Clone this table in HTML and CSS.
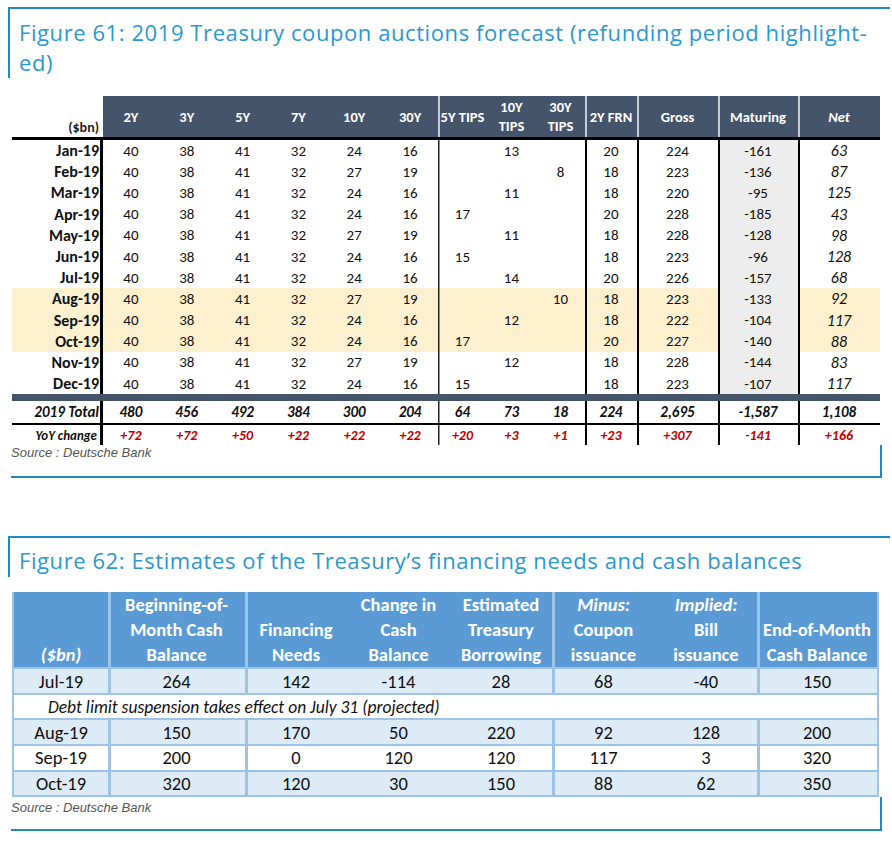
FILE: index.html
```html
<!DOCTYPE html>
<html>
<head>
<meta charset="utf-8">
<link rel="stylesheet" href="styles.css">
</head>
<body>
<section class="fig">
  <div class="fig-head fig-head-61">
    <h2 class="fig-title">Figure 61: 2019 Treasury coupon auctions forecast (refunding period highlight-<br>ed)</h2>
  </div>
  <div class="t61">
    <div class="r61 hdr">
      <div class="c lbl unit">($bn)</div>
      <div class="c h">2Y</div><div class="c h">3Y</div><div class="c h">5Y</div><div class="c h">7Y</div><div class="c h">10Y</div><div class="c h">30Y</div>
      <div class="c h hs">5Y TIPS</div><div class="c h two"><span>10Y<br>TIPS</span></div><div class="c h two"><span>30Y<br>TIPS</span></div>
      <div class="c h hs">2Y FRN</div><div class="c h hs">Gross</div><div class="c h hs">Maturing</div><div class="c h hs it">Net</div>
    </div>
    <div class="rule"></div>
    <div class="r61 body"><div class="c lbl">Jan-19</div><div class="c">40</div><div class="c">38</div><div class="c">41</div><div class="c">32</div><div class="c">24</div><div class="c">16</div><div class="c s1"></div><div class="c">13</div><div class="c"></div><div class="c s2">20</div><div class="c s2">224</div><div class="c s2 mat">-161</div><div class="c s2 net">63</div></div>
    <div class="r61 body"><div class="c lbl">Feb-19</div><div class="c">40</div><div class="c">38</div><div class="c">41</div><div class="c">32</div><div class="c">27</div><div class="c">19</div><div class="c s1"></div><div class="c"></div><div class="c">8</div><div class="c s2">18</div><div class="c s2">223</div><div class="c s2 mat">-136</div><div class="c s2 net">87</div></div>
    <div class="r61 body"><div class="c lbl">Mar-19</div><div class="c">40</div><div class="c">38</div><div class="c">41</div><div class="c">32</div><div class="c">24</div><div class="c">16</div><div class="c s1"></div><div class="c">11</div><div class="c"></div><div class="c s2">18</div><div class="c s2">220</div><div class="c s2 mat">-95</div><div class="c s2 net">125</div></div>
    <div class="r61 body"><div class="c lbl">Apr-19</div><div class="c">40</div><div class="c">38</div><div class="c">41</div><div class="c">32</div><div class="c">24</div><div class="c">16</div><div class="c s1">17</div><div class="c"></div><div class="c"></div><div class="c s2">20</div><div class="c s2">228</div><div class="c s2 mat">-185</div><div class="c s2 net">43</div></div>
    <div class="r61 body"><div class="c lbl">May-19</div><div class="c">40</div><div class="c">38</div><div class="c">41</div><div class="c">32</div><div class="c">27</div><div class="c">19</div><div class="c s1"></div><div class="c">11</div><div class="c"></div><div class="c s2">18</div><div class="c s2">228</div><div class="c s2 mat">-128</div><div class="c s2 net">98</div></div>
    <div class="r61 body"><div class="c lbl">Jun-19</div><div class="c">40</div><div class="c">38</div><div class="c">41</div><div class="c">32</div><div class="c">24</div><div class="c">16</div><div class="c s1">15</div><div class="c"></div><div class="c"></div><div class="c s2">18</div><div class="c s2">223</div><div class="c s2 mat">-96</div><div class="c s2 net">128</div></div>
    <div class="r61 body"><div class="c lbl">Jul-19</div><div class="c">40</div><div class="c">38</div><div class="c">41</div><div class="c">32</div><div class="c">24</div><div class="c">16</div><div class="c s1"></div><div class="c">14</div><div class="c"></div><div class="c s2">20</div><div class="c s2">226</div><div class="c s2 mat">-157</div><div class="c s2 net">68</div></div>
    <div class="r61 body hl"><div class="c lbl">Aug-19</div><div class="c">40</div><div class="c">38</div><div class="c">41</div><div class="c">32</div><div class="c">27</div><div class="c">19</div><div class="c s1"></div><div class="c"></div><div class="c">10</div><div class="c s2">18</div><div class="c s2">223</div><div class="c s2 mat">-133</div><div class="c s2 net">92</div></div>
    <div class="r61 body hl"><div class="c lbl">Sep-19</div><div class="c">40</div><div class="c">38</div><div class="c">41</div><div class="c">32</div><div class="c">24</div><div class="c">16</div><div class="c s1"></div><div class="c">12</div><div class="c"></div><div class="c s2">18</div><div class="c s2">222</div><div class="c s2 mat">-104</div><div class="c s2 net">117</div></div>
    <div class="r61 body hl"><div class="c lbl">Oct-19</div><div class="c">40</div><div class="c">38</div><div class="c">41</div><div class="c">32</div><div class="c">24</div><div class="c">16</div><div class="c s1">17</div><div class="c"></div><div class="c"></div><div class="c s2">20</div><div class="c s2">227</div><div class="c s2 mat">-140</div><div class="c s2 net">88</div></div>
    <div class="r61 body"><div class="c lbl">Nov-19</div><div class="c">40</div><div class="c">38</div><div class="c">41</div><div class="c">32</div><div class="c">27</div><div class="c">19</div><div class="c s1"></div><div class="c">12</div><div class="c"></div><div class="c s2">18</div><div class="c s2">228</div><div class="c s2 mat">-144</div><div class="c s2 net">83</div></div>
    <div class="r61 body"><div class="c lbl">Dec-19</div><div class="c">40</div><div class="c">38</div><div class="c">41</div><div class="c">32</div><div class="c">24</div><div class="c">16</div><div class="c s1">15</div><div class="c"></div><div class="c"></div><div class="c s2">18</div><div class="c s2">223</div><div class="c s2 mat">-107</div><div class="c s2 net">117</div></div>
    <div class="darkbar"></div>
    <div class="r61 tot"><div class="c lbl">2019 Total</div><div class="c">480</div><div class="c">456</div><div class="c">492</div><div class="c">384</div><div class="c">300</div><div class="c">204</div><div class="c s1">64</div><div class="c">73</div><div class="c">18</div><div class="c s2">224</div><div class="c s2">2,695</div><div class="c s2">-1,587</div><div class="c s2">1,108</div></div>
    <div class="rule2"></div>
    <div class="r61 yoy"><div class="c lbl">YoY change</div><div class="c">+72</div><div class="c">+72</div><div class="c">+50</div><div class="c">+22</div><div class="c">+22</div><div class="c">+22</div><div class="c s1">+20</div><div class="c">+3</div><div class="c">+1</div><div class="c s2">+23</div><div class="c s2">+307</div><div class="c s2">-141</div><div class="c s2">+166</div></div>
  </div>
  <div class="fig-foot foot-61"><p class="source">Source : Deutsche Bank</p></div>
</section>

<section class="fig fig62">
  <div class="fig-head fig-head-62">
    <h2 class="fig-title">Figure 62: Estimates of the Treasury’s financing needs and cash balances</h2>
  </div>
  <div class="t62tab">
    <div class="r62 hdr62">
      <div class="d it"><span>($bn)</span></div>
      <div class="d g"><span>Beginning-of-<br>Month Cash<br>Balance</span></div>
      <div class="d g"><span>Financing<br>Needs</span></div>
      <div class="d"><span>Change in<br>Cash<br>Balance</span></div>
      <div class="d"><span>Estimated<br>Treasury<br>Borrowing</span></div>
      <div class="d g"><span><i>Minus:</i><br>Coupon<br>issuance</span></div>
      <div class="d"><span><i>Implied:</i><br>Bill<br>issuance</span></div>
      <div class="d g"><span>End-of-Month<br>Cash Balance</span></div>
    </div>
    <div class="r62 b62 alt"><div class="d">Jul-19</div><div class="d g">264</div><div class="d g">142</div><div class="d">-114</div><div class="d">28</div><div class="d g">68</div><div class="d">-40</div><div class="d g">150</div></div>
    <div class="r62 b62 note"><div class="d notecell">Debt limit suspension takes effect on July 31 (projected)</div></div>
    <div class="r62 b62 alt"><div class="d">Aug-19</div><div class="d g">150</div><div class="d g">170</div><div class="d">50</div><div class="d">220</div><div class="d g">92</div><div class="d">128</div><div class="d g">200</div></div>
    <div class="r62 b62"><div class="d">Sep-19</div><div class="d g">200</div><div class="d g">0</div><div class="d">120</div><div class="d">120</div><div class="d g">117</div><div class="d">3</div><div class="d g">320</div></div>
    <div class="r62 b62 alt"><div class="d">Oct-19</div><div class="d g">320</div><div class="d g">120</div><div class="d">30</div><div class="d">150</div><div class="d g">88</div><div class="d">62</div><div class="d g">350</div></div>
  </div>
  <div class="fig-foot foot-62"><p class="source">Source : Deutsche Bank</p></div>
</section>
</body>
</html>
```

FILE: styles.css
```css
* { box-sizing: border-box; }
body {
  margin: 0;
  background: #ffffff;
  width: 892px;
  font-family: "Carlito", "Lato", "Liberation Sans", sans-serif;
  color: #111;
}
.fig-head {
  margin-left: 8px;
  width: 882px;
  border-top: 2px solid #1e8cc2;
  border-left: 2px solid #1e8cc2;
}
.fig-head-61 { margin-top: 7px; height: 71px; padding: 7.5px 0 0 9px; }
.fig-head-62 { margin-top: 58px; height: 41px; padding: 6.5px 0 0 9px; }
.fig-title {
  margin: 0;
  font-family: "Open Sans", "Liberation Sans", sans-serif;
  font-weight: normal;
  font-size: 22px;
  letter-spacing: 0.58px;
  line-height: 30px;
  color: #2a98d3;
  white-space: nowrap;
}

/* ---------- Figure 61 table ---------- */
.t61 { margin: 18px 0 0 12px; width: 868px; }
.r61 {
  display: grid;
  grid-template-columns: 91px repeat(6, 55.833px) 49px 49px 49px 52px 81px 80px 82px;
}
.r61 .c {
  display: flex;
  align-items: center;
  justify-content: center;
  white-space: nowrap;
}
.hdr { height: 41px; }
.hdr .h {
  background: #44546a;
  color: #fff;
  font-weight: bold;
  font-size: 14.5px;
  line-height: 20px;
  text-align: center;
}
.hdr .h.two { line-height: 19px; }
.hdr .hs { box-shadow: inset 2px 0 0 #c7cbd2; }
.hdr .it { font-style: italic; }
.hdr .unit {
  justify-content: flex-end;
  align-items: flex-end;
  padding: 0 3px 1px 0;
  font-size: 14px;
  color: #222;
  font-weight: normal;
}
.rule { height: 3px; background: #000; }
.rule2 { height: 2px; background: #000; }
.darkbar { height: 7px; background: #44546a; }
.body { height: 21.2px; font-size: 15px; }
.body.hl { background: #fdf0cf; }
.r61 .lbl {
  justify-content: flex-end;
  padding-right: 4px;
  font-weight: bold;
  box-shadow: inset -3px 0 0 #000;
}
.body .lbl { font-size: 16px; }
.hdr .lbl { box-shadow: none; }
.r61 .s1 { box-shadow: inset 1.5px 0 0 #222; }
.r61 .s2 { box-shadow: inset 2px 0 0 #000; }
.body .mat { background: #ededed; }
.body .net { font-style: italic; font-size: 16px; }
.tot { height: 22px; font-size: 15px; font-weight: bold; font-style: italic; }
.yoy { height: 20px; font-size: 14px; font-weight: bold; font-style: italic; }
.yoy .c { color: #c00000; }
.r61.yoy .lbl { color: #111; font-size: 13px; padding-right: 6px; }

.fig-foot {
  margin-left: 11px;
  width: 871px;
  border-right: 2px solid #1e8cc2;
  border-bottom: 2px solid #1e8cc2;
}
.foot-61 { height: 33px; }
.foot-62 { height: 34px; }
.source {
  margin: 0;
  font-family: "Liberation Sans", Arial, sans-serif;
  font-style: italic;
  font-size: 13px;
  color: #555;
}
.foot-61 .source { line-height: 16px; }
.foot-62 .source { line-height: 22px; }

/* ---------- Figure 62 table ---------- */
.t62tab {
  margin: 15px 0 0 12px;
  width: 867px;
  border-left: 2px solid #9dc3e6;
  border-right: 2px solid #9dc3e6;
  border-bottom: 2px solid #9dc3e6;
}
.r62 {
  display: grid;
  grid-template-columns: 94px 137px 102px 103px 102px 103px 102px 120px;
  font-size: 18.5px;
}
.r62 .d {
  display: flex;
  align-items: center;
  justify-content: center;
  text-align: center;
  white-space: nowrap;
}
.r62 .g { box-shadow: inset 3px 0 0 #9dc3e6; }
.hdr62 {
  height: 75px;
  background: #5b9bd5;
  color: #fff;
  font-weight: bold;
  font-size: 18.5px;
  line-height: 25px;
}
.hdr62 .d { align-items: flex-end; }
.hdr62 .it { font-style: italic; }
.b62 { height: 25.6px; border-top: 2px solid #9dc3e6; color: #111; }
.b62.alt { background: #ddebf7; }
.note { grid-template-columns: 1fr; background: #fff; }
.r62 .notecell {
  justify-content: flex-start;
  padding-left: 34px;
  font-style: italic;
  font-size: 17.5px;
}
```
